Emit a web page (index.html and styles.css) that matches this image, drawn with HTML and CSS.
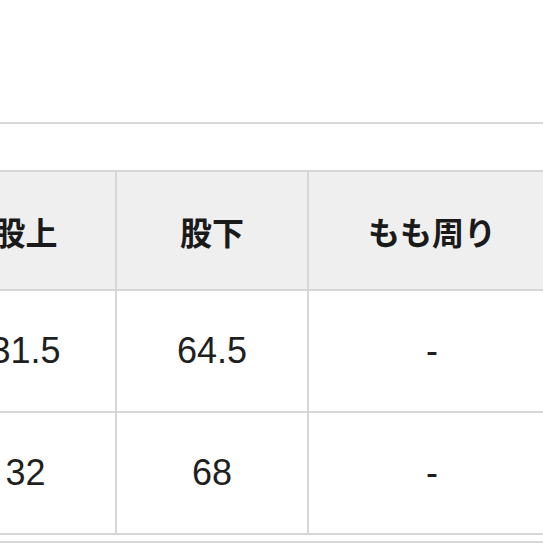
FILE: index.html
```html
<!DOCTYPE html>
<html lang="ja">
<head>
<meta charset="utf-8">
<link rel="stylesheet" href="styles.css">
</head>
<body>
<div class="page">
  <div class="divider top"></div>
  <div class="table-wrap">
    <table class="size-table">
      <colgroup>
        <col class="c1">
        <col class="c2">
        <col class="c3">
      </colgroup>
      <thead>
        <tr class="head-row">
          <th>股上</th>
          <th>股下</th>
          <th>もも周り</th>
        </tr>
      </thead>
      <tbody>
        <tr class="body-row">
          <td>31.5</td>
          <td>64.5</td>
          <td>-</td>
        </tr>
        <tr class="body-row">
          <td>32</td>
          <td>68</td>
          <td>-</td>
        </tr>
      </tbody>
    </table>
  </div>
  <div class="divider bottom"></div>
</div>
</body>
</html>
```
FILE: styles.css
```css
html, body {
  margin: 0;
  padding: 0;
  background: #ffffff;
  overflow: hidden;
}
.page {
  width: 543px;
  height: 543px;
  overflow: hidden;
  font-family: "Liberation Sans", "Noto Sans CJK JP", sans-serif;
  color: #1c1c1c;
}
.divider {
  height: 2px;
  background: #d8d8d8;
}
.divider.top {
  margin-top: 122px;
}
.divider.bottom {
  margin-top: 6px;
}
.table-wrap {
  margin-top: 46px;
  margin-left: -66px;
}
.size-table {
  border-collapse: collapse;
  table-layout: fixed;
  width: 621px;
}
.c1 { width: 181px; }
.c2 { width: 192px; }
.c3 { width: 248px; }
.size-table th,
.size-table td {
  border: 2px solid #d6d6d6;
  padding: 0;
  text-align: center;
  vertical-align: middle;
}
.size-table th {
  background: #efefef;
  font-family: "Noto Sans CJK JP", sans-serif;
  font-weight: 700;
  font-size: 32px;
  height: 117px;
  color: #1a1a1a;
}
.size-table td {
  font-size: 36px;
  height: 120px;
  color: #1f1f1f;
}
```
